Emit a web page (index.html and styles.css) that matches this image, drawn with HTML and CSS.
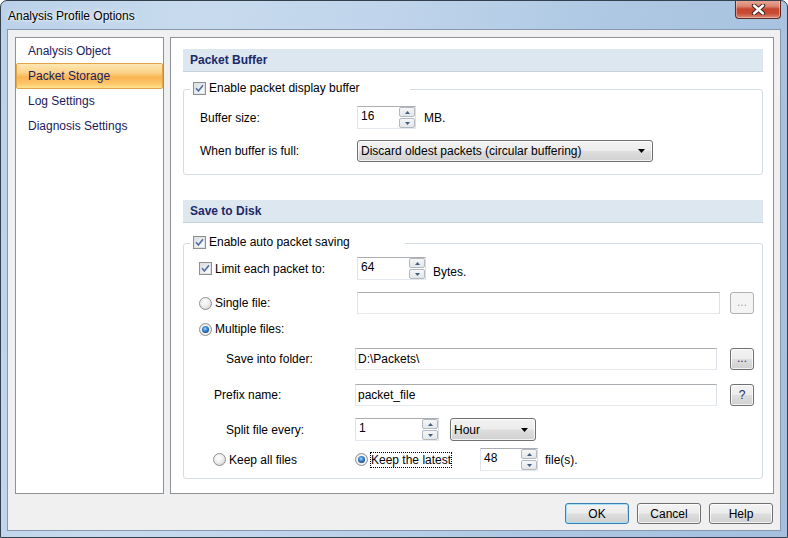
FILE: index.html
```html
<!DOCTYPE html>
<html>
<head>
<meta charset="utf-8">
<title>Analysis Profile Options</title>
<link rel="stylesheet" href="styles.css">
</head>
<body>
<div class="window">
  <div class="titlebar">
    <span class="title">Analysis Profile Options</span>
    <div class="close">
      <svg width="15" height="11" viewBox="0 0 15 11"><path d="M3 1.5 L12 9.5 M12 1.5 L3 9.5" stroke="#3b2520" stroke-width="4.4" stroke-linecap="round"/><path d="M3 1.5 L12 9.5 M12 1.5 L3 9.5" stroke="#ffffff" stroke-width="2.4" stroke-linecap="round"/></svg>
    </div>
  </div>
  <div class="client">
    <div class="body">
      <ul class="nav">
        <li>Analysis Object</li>
        <li class="sel">Packet Storage</li>
        <li>Log Settings</li>
        <li>Diagnosis Settings</li>
      </ul>
      <div class="main">
        <div class="sect">Packet Buffer</div>
        <div class="group g1">
          <div class="legend lw1">
            <span class="chk"><svg width="9" height="9" viewBox="0 0 9 9"><path d="M1 4.2 L3.4 7 L8 1.2" stroke="#5670a4" stroke-width="1.7" fill="none"/></svg></span>
            <span class="ctext">Enable packet display buffer</span>
          </div>
          <div class="row r-buf">
            <span class="lab l173 p16">Buffer size:</span>
            <div class="spin sw59">
              <span class="val">16</span>
              <span class="btns"><span class="sb"><svg width="5" height="3" viewBox="0 0 5 3"><path d="M0 3 L2.5 0 L5 3z" fill="#3f5e86"/></svg></span><span class="sb"><svg width="5" height="3" viewBox="0 0 5 3"><path d="M0 0 L2.5 3 L5 0z" fill="#3f5e86"/></svg></span></span>
            </div>
            <span class="unit u8">MB.</span>
          </div>
          <div class="row r-full">
            <span class="lab l173 p16">When buffer is full:</span>
            <div class="combo cw296">
              <span class="ctxt">Discard oldest packets (circular buffering)</span>
              <svg class="arrow" width="7" height="4" viewBox="0 0 7 4"><path d="M0 0 L7 0 L3.5 4z" fill="#000"/></svg>
            </div>
          </div>
        </div>

        <div class="sect s2">Save to Disk</div>
        <div class="group g2">
          <div class="legend lw2">
            <span class="chk"><svg width="9" height="9" viewBox="0 0 9 9"><path d="M1 4.2 L3.4 7 L8 1.2" stroke="#5670a4" stroke-width="1.7" fill="none"/></svg></span>
            <span class="ctext">Enable auto packet saving</span>
          </div>
          <div class="row r-limit">
            <span class="lab l173 p15">
              <span class="chk"><svg width="9" height="9" viewBox="0 0 9 9"><path d="M1 4.2 L3.4 7 L8 1.2" stroke="#5670a4" stroke-width="1.7" fill="none"/></svg></span>
              <span class="ctext">Limit each packet to:</span>
            </span>
            <div class="spin sw69">
              <span class="val">64</span>
              <span class="btns"><span class="sb"><svg width="5" height="3" viewBox="0 0 5 3"><path d="M0 3 L2.5 0 L5 3z" fill="#3f5e86"/></svg></span><span class="sb"><svg width="5" height="3" viewBox="0 0 5 3"><path d="M0 0 L2.5 3 L5 0z" fill="#3f5e86"/></svg></span></span>
            </div>
            <span class="unit u7 low">Bytes.</span>
          </div>
          <div class="row r-single">
            <span class="lab l173 p15">
              <span class="radio"></span>
              <span class="ctext">Single file:</span>
            </span>
            <div class="input iw363"></div>
            <span class="btn small disabled m10">...</span>
          </div>
          <div class="row r-multi">
            <span class="lab l173 p15">
              <span class="radio on"><span class="dot"></span></span>
              <span class="ctext">Multiple files:</span>
            </span>
          </div>
          <div class="row r-save">
            <span class="lab l171 p42">Save into folder:</span>
            <div class="input iw362">D:\Packets\</div>
            <span class="btn small m13"><span class="dots">...</span></span>
          </div>
          <div class="row r-prefix">
            <span class="lab l171 p30">Prefix name:</span>
            <div class="input iw362">packet_file</div>
            <span class="btn small m13 q">?</span>
          </div>
          <div class="row r-split">
            <span class="lab l171 p42">Split file every:</span>
            <div class="spin sw84">
              <span class="val">1</span>
              <span class="btns"><span class="sb"><svg width="5" height="3" viewBox="0 0 5 3"><path d="M0 3 L2.5 0 L5 3z" fill="#3f5e86"/></svg></span><span class="sb"><svg width="5" height="3" viewBox="0 0 5 3"><path d="M0 0 L2.5 3 L5 0z" fill="#3f5e86"/></svg></span></span>
            </div>
            <div class="combo cw86 m11">
              <span class="ctxt">Hour</span>
              <svg class="arrow" width="7" height="4" viewBox="0 0 7 4"><path d="M0 0 L7 0 L3.5 4z" fill="#000"/></svg>
            </div>
          </div>
          <div class="row r-keep">
            <span class="lab l171 p29">
              <span class="radio"></span>
              <span class="ctext">Keep all files</span>
            </span>
            <span class="latest">
              <span class="radio on"><span class="dot"></span></span>
              <span class="focus">Keep the latest</span>
            </span>
            <div class="spin sw58">
              <span class="val">48</span>
              <span class="btns"><span class="sb"><svg width="5" height="3" viewBox="0 0 5 3"><path d="M0 3 L2.5 0 L5 3z" fill="#3f5e86"/></svg></span><span class="sb"><svg width="5" height="3" viewBox="0 0 5 3"><path d="M0 0 L2.5 3 L5 0z" fill="#3f5e86"/></svg></span></span>
            </div>
            <span class="unit u7">file(s).</span>
          </div>
        </div>
      </div>
    </div>
    <div class="footer">
      <span class="btn big default">OK</span>
      <span class="btn big">Cancel</span>
      <span class="btn big">Help</span>
    </div>
  </div>
</div>
</body>
</html>
```

FILE: styles.css
```css
html, body {
  margin: 0;
  padding: 0;
  overflow: hidden;
  background: #ffffff;
}
body {
  font-family: "Liberation Sans", Arial, sans-serif;
  font-size: 12px;
  color: #000;
}
.window {
  width: 788px;
  height: 538px;
  box-sizing: border-box;
  border: 1px solid #33414f;
  border-radius: 7px 7px 0 0;
  background: linear-gradient(100deg, #bad1e9 0%, #c8dbee 22%, #bfd4eb 45%, #aec8e3 70%, #a5c0de 100%);
  display: flex;
  flex-direction: column;
  overflow: hidden;
}
.titlebar {
  height: 28px;
  flex: none;
  display: flex;
  align-items: center;
  padding-left: 7px;
}
.title {
  color: #000;
  font-size: 12px;
  text-shadow: 0 0 6px rgba(255,255,255,0.9), 0 0 3px rgba(255,255,255,0.9);
  margin-top: 2px;
}
.close {
  margin-left: auto;
  margin-right: 6px;
  align-self: flex-start;
  margin-top: -1px;
  width: 44px;
  height: 18px;
  border: 1px solid #5c2b24;
  border-top: none;
  border-radius: 0 0 4px 4px;
  background: linear-gradient(#e9a99a 0%, #dc8672 35%, #c7452f 50%, #c94d37 75%, #dc8b77 100%);
  box-shadow: inset 0 0 0 1px rgba(255,220,210,0.45);
  display: flex;
  align-items: center;
  justify-content: center;
}
.client {
  flex: 1;
  margin: 0 6px 6px 6px;
  border: 1px solid #8598ae;
  background: #f0f0f0;
  padding: 7px 6px 0 7px;
  display: flex;
  flex-direction: column;
}
.body {
  height: 457px;
  display: flex;
  gap: 6px;
  flex: none;
}
.nav {
  list-style: none;
  margin: 0;
  padding: 1px 0 0 0;
  width: 149px;
  box-sizing: border-box;
  border: 1px solid #8e9399;
  background: #fff;
  flex: none;
}
.nav li {
  height: 25px;
  line-height: 25px;
  padding-left: 12px;
  color: #1a2160;
  box-sizing: border-box;
}
.nav li.sel {
  margin-top: -1px;
  height: 26px;
  padding-left: 11px;
  line-height: 25px;
  border: 1px solid #e3a443;
  border-radius: 2px;
  background: linear-gradient(#fde7b4 0%, #fcd38b 35%, #f9b653 55%, #fbc466 80%, #fde38d 100%);
}
.main {
  flex: 1;
  box-sizing: border-box;
  border: 1px solid #8e9399;
  background: #fff;
  padding: 11px 10px 0 12px;
}
.sect {
  height: 22px;
  line-height: 22px;
  background: #dde7ef;
  border-bottom: 1px solid #c6d3dd;
  padding-left: 7px;
  font-weight: bold;
  color: #1c2a6a;
}
.sect.s2 {
  margin-top: 25px;
}
.group {
  border: 1px solid #d3dde4;
  border-radius: 3px;
  display: flex;
  flex-direction: column;
}
.g1 {
  margin-top: 17px;
  padding-bottom: 12px;
}
.g2 {
  margin-top: 20px;
  padding-bottom: 7px;
}
.legend {
  margin-top: -10px;
  margin-left: 6px;
  padding-left: 3px;
  height: 16px;
  background: #fff;
  display: flex;
  align-items: center;
  box-sizing: border-box;
}
.lw1 { width: 220px; }
.lw2 { width: 215px; }
.chk {
  width: 13px;
  height: 13px;
  box-sizing: border-box;
  border: 1px solid #8e8f8f;
  background: #fff;
  display: flex;
  align-items: center;
  justify-content: center;
  flex: none;
}
.chk svg {
  width: 9px;
  height: 9px;
  background: linear-gradient(135deg, #d9dde2 0%, #f1f2f4 60%, #fbfbfb 100%);
  outline: 1px solid #dfe2e6;
}
.ctext {
  margin-left: 3px;
  white-space: nowrap;
}
.radio {
  width: 13px;
  height: 13px;
  box-sizing: border-box;
  border-radius: 50%;
  border: 1px solid #8e8f8f;
  background: radial-gradient(circle at 40% 35%, #ffffff 0%, #eeeeee 45%, #c8c8c8 100%);
  display: flex;
  align-items: center;
  justify-content: center;
  flex: none;
}
.radio.on {
  background: radial-gradient(circle at 50% 50%, #ffffff 0%, #f0f0f0 60%, #cfcfcf 100%);
}
.radio .dot {
  width: 7px;
  height: 7px;
  border-radius: 50%;
  background: radial-gradient(circle at 45% 40%, #a6dcff 0%, #3f8ed8 35%, #1b4f8c 70%, #0f2f5c 100%);
}
.row {
  display: flex;
  align-items: center;
}
.lab {
  box-sizing: border-box;
  flex: none;
  display: flex;
  align-items: center;
  white-space: nowrap;
}
.l173 { width: 173px; }
.l171 { width: 171px; }
.p15 { padding-left: 15px; }
.p16 { padding-left: 16px; }
.p29 { padding-left: 29px; }
.p30 { padding-left: 30px; }
.p42 { padding-left: 42px; }

.r-buf { margin-top: 10px; height: 23px; }
.r-full { margin-top: 11px; height: 22px; }
.r-limit { margin-top: 7px; height: 23px; }
.r-single { margin-top: 12px; height: 22px; }
.r-multi { margin-top: 6px; height: 18px; }
.r-save { margin-top: 10px; height: 22px; }
.r-prefix { margin-top: 14px; height: 22px; }
.r-split { margin-top: 12px; height: 23px; }
.r-keep { margin-top: 7px; height: 23px; }

.spin {
  height: 23px;
  box-sizing: border-box;
  border: 1px solid;
  border-color: #abadb3 #dbdfe6 #e3e9ef #e2e3ea;
  display: flex;
  background: #fff;
  flex: none;
}
.sw58 { width: 58px; }
.sw59 { width: 59px; }
.sw69 { width: 69px; }
.sw84 { width: 84px; }
.val {
  flex: 1;
  padding: 2px 0 0 3px;
  line-height: 15px;
}
.btns {
  width: 16px;
  display: flex;
  flex-direction: column;
  gap: 1px;
}
.sb {
  flex: 1;
  box-sizing: border-box;
  border: 1px solid #b3b9c2;
  border-radius: 2px;
  background: linear-gradient(#f6f6f6, #e4e6e8);
  display: flex;
  align-items: center;
  justify-content: center;
}
.unit { flex: none; white-space: nowrap; }
.u7 { margin-left: 7px; }
.u8 { margin-left: 8px; }
.low { margin-top: 6px; }
.m10 { margin-left: 10px; }
.m11 { margin-left: 11px; }
.m13 { margin-left: 13px; }

.input {
  height: 22px;
  box-sizing: border-box;
  border: 1px solid;
  border-color: #abadb3 #dbdfe6 #e3e9ef #e2e3ea;
  background: #fff;
  padding: 0 0 0 2px;
  line-height: 20px;
  flex: none;
}
.iw362 { width: 362px; }
.iw363 { width: 363px; }

.combo {
  height: 22px;
  box-sizing: border-box;
  border: 1px solid #707070;
  border-radius: 3px;
  background: linear-gradient(#f3f3f3 0%, #ececec 48%, #dedede 52%, #d1d1d1 100%);
  box-shadow: inset 0 0 0 1px rgba(255,255,255,0.75);
  display: flex;
  align-items: center;
  padding-left: 3px;
  flex: none;
}
.cw296 { width: 296px; }
.cw86 { width: 86px; height: 23px; }
.combo .arrow {
  margin-left: auto;
  margin-right: 7px;
}

.btn {
  box-sizing: border-box;
  border: 1px solid #707070;
  border-radius: 3px;
  background: linear-gradient(#f3f3f3 0%, #ececec 48%, #dedede 52%, #d0d0d0 100%);
  box-shadow: inset 0 0 0 1px rgba(255,255,255,0.75);
  display: flex;
  align-items: center;
  justify-content: center;
  flex: none;
  color: #000;
}
.btn.small {
  width: 24px;
  height: 22px;
  font-size: 12px;
}
.btn.small .dots {
  color: #4a2a6a;
  margin-top: -3px;
}
.btn.q {
  color: #1e2c5c;
}
.btn.disabled {
  border-color: #adb2b5;
  background: #f4f4f4;
  box-shadow: none;
  color: #a5a5a5;
  padding-bottom: 3px;
}
.latest {
  width: 125px;
  flex: none;
  display: flex;
  align-items: center;
}
.focus {
  margin-left: 2px;
  padding: 0 1px;
  height: 16px;
  line-height: 16px;
  white-space: nowrap;
  outline: 1px dotted #000;
  outline-offset: -1px;
  flex: none;
}
.footer {
  flex: 1;
  display: flex;
  justify-content: flex-end;
  align-items: flex-start;
  padding-top: 9px;
  padding-right: 1px;
  gap: 8px;
}
.btn.big {
  width: 64px;
  height: 21px;
}
.btn.default {
  border-color: #3c7fb1;
  box-shadow: inset 0 0 0 1px #a6e1f8;
}
```
